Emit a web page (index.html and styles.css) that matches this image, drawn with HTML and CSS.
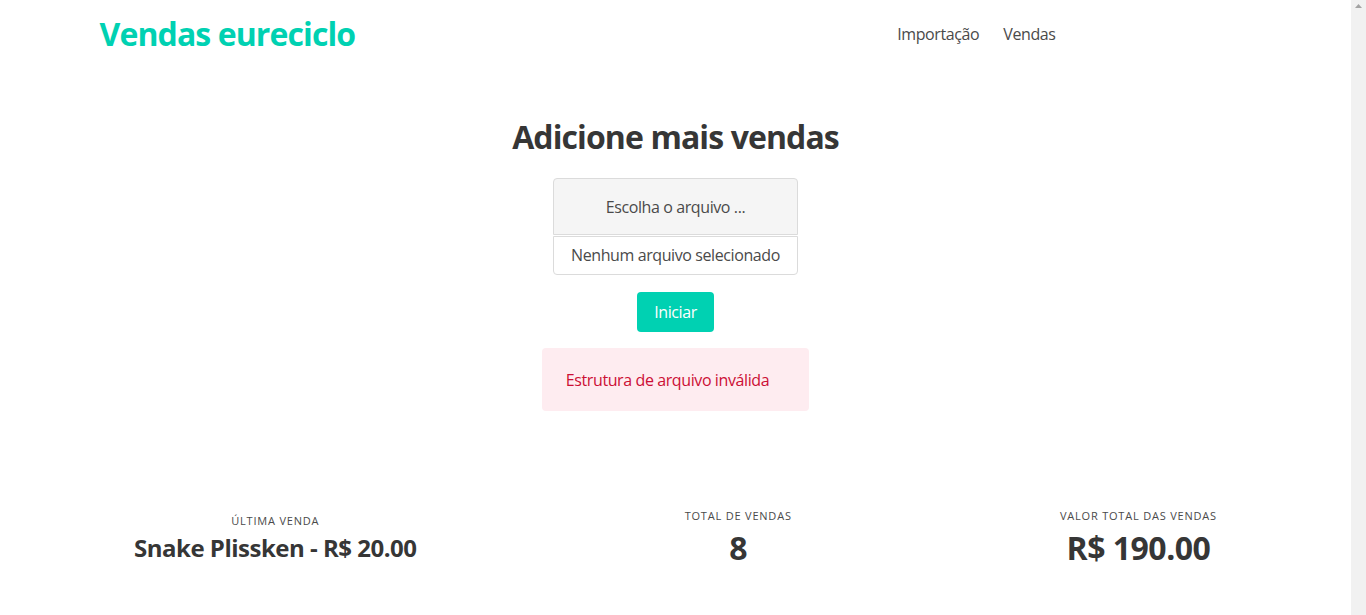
FILE: index.html
```html
<!DOCTYPE html>
<html lang="pt-BR">
<head>
<meta charset="utf-8">
<title>Vendas eureciclo</title>
<link rel="stylesheet" href="styles.css">
</head>
<body>
<div class="page">
  <nav class="navbar">
    <div class="container navbar-inner">
      <a class="brand" href="#">Vendas eureciclo</a>
      <div class="navbar-menu">
        <a class="navbar-item" href="#">Importação</a>
        <a class="navbar-item" href="#">Vendas</a>
      </div>
    </div>
  </nav>
  <section class="section">
    <h1 class="title is-3">Adicione mais vendas</h1>
    <div class="file">
      <label class="file-label">
        <span class="file-cta">Escolha o arquivo ...</span>
        <span class="file-name">Nenhum arquivo selecionado</span>
      </label>
    </div>
    <button class="button is-primary">Iniciar</button>
    <div class="notification is-danger">Estrutura de arquivo inválida</div>
  </section>
  <div class="level">
    <div class="level-item">
      <p class="heading">Última venda</p>
      <p class="title is-4">Snake Plissken - R$ 20.00</p>
    </div>
    <div class="level-item">
      <p class="heading">Total de vendas</p>
      <p class="title is-3">8</p>
    </div>
    <div class="level-item">
      <p class="heading">Valor total das vendas</p>
      <p class="title is-3">R$ 190.00</p>
    </div>
  </div>
</div>
<div class="scrollbar" aria-hidden="true">
  <svg class="scroll-arrow" width="15" height="15" viewBox="0 0 15 15"><path d="M7.5 4 L11 8 L4 8 Z" fill="#a3a3a3"/></svg>
</div>
</body>
</html>
```
FILE: styles.css
```css
body {
  margin: 0;
  font-family: "Open Sans", "Noto Sans", sans-serif;
  font-size: 16px;
  line-height: 1.5;
  color: #4a4a4a;
  background: #fff;
  display: flex;
  height: 615px;
  overflow: hidden;
  letter-spacing: -0.4px;
}
.page { width: 1351px; flex: 0 0 1351px; }
.scrollbar {
  flex: 0 0 15px;
  background: #f1f1f1;
}
.scroll-arrow { display: block; }
a { text-decoration: none; }
p { margin: 0; }
.container { width: 1152px; margin: 0 auto; }
.navbar-inner {
  display: flex;
  align-items: center;
  height: 67px;
}
.brand {
  font-size: 32px;
  font-weight: 700;
  color: #00d1b2;
  line-height: 1;
  letter-spacing: -0.9px;
}
.navbar-menu {
  margin-left: auto;
  margin-right: 196px;
  display: flex;
  gap: 24px;
}
.navbar-item { color: #4a4a4a; font-size: 16px; }
.section {
  display: flex;
  flex-direction: column;
  align-items: center;
  padding-top: 52px;
}
.title {
  margin: 0;
  color: #363636;
  font-weight: 700;
  line-height: 1.125;
}
.title.is-3 { font-size: 32px; }
.title.is-4 { font-size: 24px; }
.section .title { margin-bottom: 23px; letter-spacing: -0.9px; }
.file-label {
  display: flex;
  flex-direction: column;
  width: 245px;
}
.file-cta {
  background: #f5f5f5;
  border: 1px solid #dbdbdb;
  border-radius: 4px 4px 0 0;
  padding: 16px 0 15px;
  text-align: center;
  color: #4a4a4a;
}
.file-name {
  border: 1px solid #dbdbdb;
  border-radius: 0 0 4px 4px;
  height: 39px;
  box-sizing: border-box;
  padding: 6px 0;
  text-align: center;
  color: #4a4a4a;
  margin-top: 1px;
}
.button {
  margin-top: 17px;
  height: 40px;
  padding: 0 17px;
  border: 0;
  border-radius: 4px;
  background: #00d1b2;
  color: #fff;
  font-family: inherit;
  font-size: 16px;
  letter-spacing: -0.4px;
}
.notification {
  margin-top: 16px;
  background: #feecf0;
  color: #cc0f35;
  border-radius: 4px;
  padding: 20px 40px 19px 24px;
}
.level {
  display: flex;
  align-items: center;
  margin-top: 97px;
}
.level-item {
  flex: 1 0 auto;
  text-align: center;
}
.level .title { letter-spacing: -0.5px; }
.heading {
  font-size: 11px;
  letter-spacing: 0.8px;
  text-transform: uppercase;
  margin-bottom: 5px;
  color: #4a4a4a;
}
```
